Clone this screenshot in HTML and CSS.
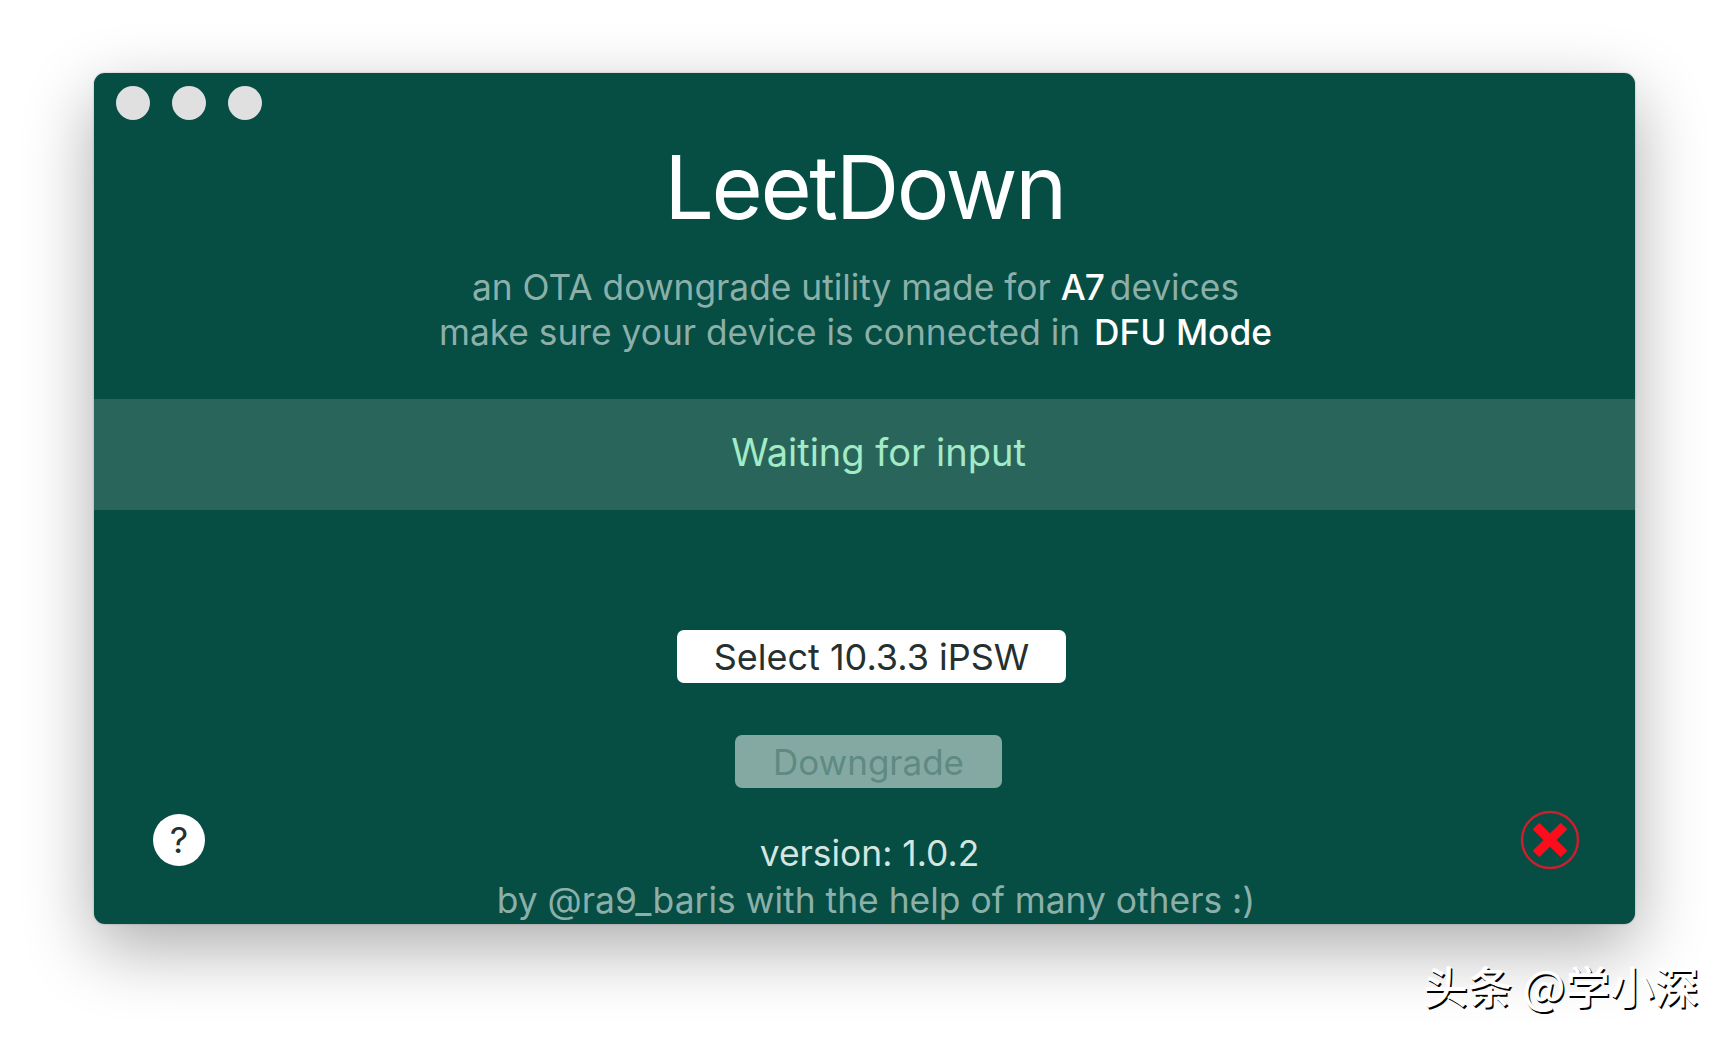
FILE: index.html
```html
<!DOCTYPE html>
<html>
<head>
  <meta charset="utf-8">
  <title>LeetDown</title>
  <link rel="stylesheet" href="styles.css">
</head>
<body>
  <div class="window">
    <div class="titlebar">
      <span class="light"></span>
      <span class="light"></span>
      <span class="light"></span>
    </div>

    <h1 class="title">LeetDown</h1>
    <p class="subtitle">
      <span class="subtitle-line">an OTA downgrade utility made for <b class="hl hl-a7">A7</b> devices</span>
      <span class="subtitle-line">make sure your device is connected in <b class="hl hl-dfu">DFU Mode</b></span>
    </p>

    <div class="status">Waiting for input</div>

    <div class="actions">
      <button class="btn btn-select">Select 10.3.3 iPSW</button>
      <button class="btn btn-downgrade" disabled>Downgrade</button>
    </div>

    <div class="footer">
      <button class="help-button">?</button>
      <div class="credits">
        <div class="version">version: 1.0.2</div>
        <div class="byline">by @ra9_baris with the help of many others :)</div>
      </div>
      <button class="close-button">
        <svg width="60" height="60" viewBox="0 0 60 60">
          <circle cx="30" cy="30" r="28" fill="none" stroke="#c8202e" stroke-width="2.5"/>
          <path d="M16 16L44 44M44 16L16 44" stroke="#fb0d1b" stroke-width="9.5"/>
        </svg>
      </button>
    </div>
  </div>

  <div class="watermark">头条 @学小深</div>
</body>
</html>
```

FILE: styles.css
```css
* {
  margin: 0;
  padding: 0;
  box-sizing: border-box;
}

body {
  height: 1041px;
  overflow: hidden;
  padding: 73px 94px 0;
  background: #ffffff;
  font-family: 'Inter', 'Liberation Sans', sans-serif;
}

.window {
  width: 1541px;
  height: 851px;
  display: flex;
  flex-direction: column;
  background: #064d44;
  border-radius: 11px;
  box-shadow: 0 24px 70px rgba(0, 0, 0, 0.33), 0 0 2px rgba(0, 0, 0, 0.3);
}

/* Window controls */
.titlebar {
  display: flex;
  gap: 22px;
  padding: 13px 0 0 22px;
}

.light {
  width: 34px;
  height: 34px;
  border-radius: 50%;
  background: #e0e0e0;
}

.title {
  margin-top: 14px;
  font-size: 88px;
  line-height: 107px;
  font-weight: 400;
  letter-spacing: -2.4px;
  text-align: center;
  color: #ffffff;
}

.subtitle {
  margin-top: 24px;
  padding-right: 18px;
  font-size: 35.3px;
  line-height: 45px;
  text-align: center;
  color: #8cb0a9;
}

.subtitle-line {
  display: block;
}

.hl {
  font-weight: 500;
  color: #ffffff;
}

.hl-a7 {
  margin-right: -4px;
  letter-spacing: -1px;
}

.hl-dfu {
  margin-left: 4px;
}

/* Status band */
.status {
  height: 111px;
  margin-top: 44px;
  padding: 0 0 6px 28px;
  display: flex;
  align-items: center;
  justify-content: center;
  background: #2a655c;
  font-size: 38px;
  color: #a3ebc7;
}

.actions {
  display: flex;
  flex-direction: column;
  align-items: center;
  margin-top: 120px;
}

.btn {
  height: 53px;
  border: none;
  border-radius: 7px;
  font-family: inherit;
}

.btn-select {
  width: 389px;
  margin-left: 14px;
  background: #ffffff;
  font-size: 36px;
  color: #26302e;
}

.btn-downgrade {
  width: 267px;
  margin-top: 52px;
  margin-left: 8px;
  background: #84a9a2;
  font-size: 35px;
  color: #5f8a82;
}

/* Bottom row */
.footer {
  flex: 1;
  display: flex;
  justify-content: space-between;
  padding: 0 55px 0 59px;
}

.help-button {
  width: 52px;
  height: 52px;
  margin-top: 26px;
  border: none;
  border-radius: 50%;
  background: #ffffff;
  font-family: inherit;
  font-size: 36px;
  color: #26302e;
}

.credits {
  margin-top: 42px;
  margin-left: 27px;
  text-align: center;
}

.version {
  padding-right: 13px;
  font-size: 35.4px;
  line-height: 48px;
  color: #d5e5e0;
}

.byline {
  font-size: 35.4px;
  line-height: 46px;
  color: #8cb0a9;
}

.close-button {
  width: 60px;
  height: 60px;
  margin-top: 22px;
  border: none;
  background: transparent;
}

.watermark {
  margin: 34px -64px 0 0;
  text-align: right;
  font-family: 'Noto Sans CJK SC', sans-serif;
  font-size: 44.5px;
  font-weight: 500;
  line-height: 54px;
  color: #ffffff;
  text-shadow: 1.5px 2px 0 #000000;
}
```
